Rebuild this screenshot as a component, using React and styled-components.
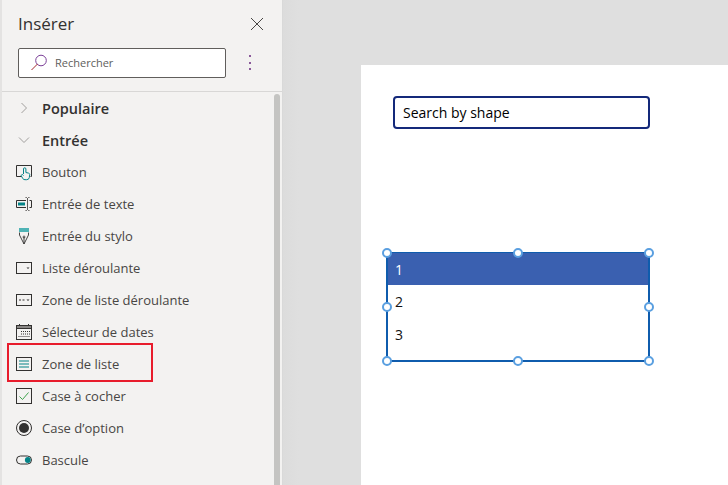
import styled, { createGlobalStyle } from "styled-components";

const GlobalStyle = createGlobalStyle`
    html, body {
        margin: 0;
        padding: 0;
        height: 485px;
        overflow: hidden;
        background: #dfdfdf;
    }
    #root {
        height: 485px;
    }
`

const Screen = styled.div`
    display: flex;
    width: 728px;
    height: 485px;
    overflow: hidden;
    font-family: "Open Sans", "Noto Sans", sans-serif;
`

const Panel = styled.aside`
    position: relative;
    box-sizing: border-box;
    width: 283px;
    height: 485px;
    flex: none;
    background: #f3f2f1;
    border-left: 2px solid #e4e3e2;
    border-right: 1px solid #d9d9d9;
    overflow: hidden;
`

const PanelHeader = styled.div`
    display: flex;
    align-items: center;
    justify-content: space-between;
    height: 47px;
    padding: 0 18px 0 16px;
`

const PanelTitle = styled.h2`
    margin: 0;
    font-size: 17px;
    font-weight: 400;
    color: #323130;
`

const IconButton = styled.button`
    display: flex;
    align-items: center;
    justify-content: center;
    padding: 0;
    border: 0;
    background: none;
`

const SearchRow = styled.div`
    display: flex;
    align-items: center;
    gap: 23px;
    height: 44px;
    padding-left: 16px;
    border-bottom: 1px solid #d8d7d6;
`

const SearchBox = styled.div`
    box-sizing: border-box;
    display: flex;
    align-items: center;
    gap: 7px;
    width: 208px;
    height: 30px;
    margin-bottom: 13px;
    padding: 0 0 0 12px;
    background: #fff;
    border: 1px solid #605e5c;
    border-radius: 2px;
    font-size: 11px;
    color: #605e5c;
`

const MoreDots = styled.div`
    display: flex;
    flex-direction: column;
    gap: 4.5px;
    margin-bottom: 13px;

    span {
        width: 2px;
        height: 2px;
        background: #8a5a9a;
    }
`

const Row = styled.div`
    display: flex;
    align-items: center;
    height: 32px;
`

const IconSlot = styled.div`
    display: flex;
    align-items: center;
    justify-content: center;
    width: 18px;
    margin-left: 13px;
    margin-right: 9px;

    svg {
        flex: none;
    }
`

const SectionLabel = styled.span`
    font-size: 14.5px;
    font-weight: 600;
    color: #323130;
`

const ItemLabel = styled.span`
    font-size: 13px;
    color: #484644;
`

const Highlight = styled.div`
    position: absolute;
    left: 5px;
    top: 343px;
    box-sizing: border-box;
    width: 146px;
    height: 39px;
    border: 2px solid #e81c2c;
`

const ScrollThumb = styled.div`
    position: absolute;
    left: 272px;
    top: 94px;
    width: 6px;
    height: 400px;
    border-radius: 3px;
    background: #c4c4c2;
`

const Canvas = styled.main`
    flex: 1;
    padding: 65px 0 0 78px;
    background: linear-gradient(90deg, #dcdcdc, #dfdfdf 16px);
`

const Page = styled.div`
    box-sizing: border-box;
    height: 420px;
    padding: 31px 0 0 25px;
    background: #fff;
`

const ShapeInput = styled.div`
    box-sizing: border-box;
    display: flex;
    align-items: center;
    width: 257px;
    height: 33px;
    margin-left: 7px;
    padding-left: 8px;
    border: 2px solid #14297a;
    border-radius: 4px;
    font-size: 14px;
    color: #000;
`

const ListBox = styled.div`
    position: relative;
    box-sizing: border-box;
    width: 264px;
    height: 110px;
    margin-top: 123px;
    border: 2px solid #0f5cad;
    border-width: 1px 2px 2px 2px;
`

const ListRow = styled.div`
    display: flex;
    align-items: center;
    height: ${props => (props.$selected ? 32 : 33)}px;
    padding-left: 7px;
    font-size: 14px;
    color: ${props => (props.$selected ? "#fff" : "#111")};
    background: ${props => (props.$selected ? "#3a60b0" : "transparent")};
`

const Handle = styled.span`
    position: absolute;
    left: ${props => props.$x}px;
    top: ${props => props.$y}px;
    box-sizing: border-box;
    width: 10px;
    height: 10px;
    background: #fff;
    border: 2px solid #5a9fe0;
    border-radius: 50%;
`

const stroke = "#323130";
const teal = "#038387";

const icons = {
    button: (
        <svg width="18" height="18" viewBox="0 0 18 18" fill="none">
            <path d="M6.5 13.5H1.5V2.5H16.5V13.5H15.5" stroke={stroke} />
            <path d="M8.5 11V6a1.2 1.2 0 0 1 2.4 0V9.5l2.6.6c.9.2 1.4.9 1.2 1.7l-.4 2.7a2.6 2.6 0 0 1-2.6 2.2H10a2.6 2.6 0 0 1-2.1-1L6.3 13c-.6-1 .9-2 1.7-1.1L8.5 12.5" stroke={teal} />
        </svg>
    ),
    text: (
        <svg width="18" height="18" viewBox="0 0 18 18" fill="none">
            <path d="M11 5.5H1.5V12.5H11" stroke={stroke} />
            <rect x="3" y="7.5" width="7" height="3" fill={teal} />
            <path d="M14.5 5.5H16.5V12.5H14.5" stroke={stroke} />
            <path d="M10.5 2.5H11.5L12.5 3.5L13.5 2.5H14.5M12.5 3.5V14.5M10.5 15.5H11.5L12.5 14.5L13.5 15.5H14.5" stroke={stroke} strokeWidth=".8" />
        </svg>
    ),
    pen: (
        <svg width="18" height="18" viewBox="0 0 18 18" fill="none">
            <rect x="4" y="1" width="10" height="4" fill="#4fb3b5" />
            <path d="M4.5 5.5V8L9 17L13.5 8V5.5M9 10V17" stroke={stroke} strokeWidth=".9" />
            <circle cx="9" cy="10" r="1" stroke={stroke} strokeWidth=".8" />
        </svg>
    ),
    dropdown: (
        <svg width="18" height="18" viewBox="0 0 18 18" fill="none">
            <rect x="1.5" y="3.5" width="15" height="11" stroke={stroke} />
            <path d="M11.5 8.5H14.5L13 10Z" fill={stroke} />
        </svg>
    ),
    combo: (
        <svg width="18" height="18" viewBox="0 0 18 18" fill="none">
            <rect x="1.5" y="3.5" width="15" height="11" stroke={stroke} />
            <path d="M4 9H6M7.5 9H9.5" stroke={stroke} />
            <path d="M11.5 8.5H14.5L13 10Z" fill={stroke} />
        </svg>
    ),
    date: (
        <svg width="18" height="18" viewBox="0 0 18 18" fill="none">
            <rect x="1.5" y="2.5" width="15" height="14" stroke={stroke} />
            <rect x="1.5" y="2.5" width="15" height="3" fill="#8a8886" stroke={stroke} />
            <path d="M4.5 1V3M13.5 1V3" stroke={stroke} />
            <path d="M6 8.5H15M6 11H15M3.5 13.5H15" stroke={stroke} strokeDasharray="1 1" />
        </svg>
    ),
    list: (
        <svg width="18" height="18" viewBox="0 0 18 18" fill="none">
            <rect x="1.5" y="2.5" width="15" height="13" stroke={stroke} />
            <path d="M4 6H14M4 9H14M4 12H14" stroke={teal} />
        </svg>
    ),
    check: (
        <svg width="18" height="18" viewBox="0 0 18 18" fill="none">
            <rect x="1.5" y="1.5" width="15" height="15" stroke={stroke} />
            <path d="M4.5 9.5L7.5 12.5L13.5 5.5" stroke="#3fa34d" />
        </svg>
    ),
    radio: (
        <svg width="18" height="18" viewBox="0 0 18 18" fill="none">
            <circle cx="9" cy="9" r="7.5" stroke={stroke} />
            <circle cx="9" cy="9" r="5" fill={stroke} />
        </svg>
    ),
    toggle: (
        <svg width="18" height="18" viewBox="0 0 18 18" fill="none">
            <rect x="1.5" y="5" width="15" height="8" rx="4" stroke={stroke} />
            <circle cx="12.8" cy="9" r="2.9" fill={teal} />
        </svg>
    ),
}

const items = [
    ["button", "Bouton"],
    ["text", "Entrée de texte"],
    ["pen", "Entrée du stylo"],
    ["dropdown", "Liste déroulante"],
    ["combo", "Zone de liste déroulante"],
    ["date", "Sélecteur de dates"],
    ["list", "Zone de liste"],
    ["check", "Case à cocher"],
    ["radio", "Case d’option"],
    ["toggle", "Bascule"],
]

const handles = [
    [-6, -5], [125, -5], [256, -5],
    [-6, 49], [256, 49],
    [-6, 103], [125, 103], [256, 103],
]

function App() {
    return (
        <Screen>
            <GlobalStyle />
            <Panel>
                <PanelHeader>
                    <PanelTitle>Insérer</PanelTitle>
                    <IconButton>
                        <svg width="14" height="14" viewBox="0 0 14 14" fill="none">
                            <path d="M1 1L13 13M13 1L1 13" stroke="#484644" />
                        </svg>
                    </IconButton>
                </PanelHeader>
                <SearchRow>
                    <SearchBox>
                        <svg width="17" height="17" viewBox="0 0 17 17" fill="none">
                            <circle cx="10" cy="6.5" r="5.3" stroke="#7b3f98" />
                            <path d="M6.5 10L0.5 16" stroke="#a4262c" />
                        </svg>
                        Rechercher
                    </SearchBox>
                    <MoreDots><span /><span /><span /></MoreDots>
                </SearchRow>
                <Row>
                    <IconSlot>
                        <svg width="10" height="12" viewBox="0 0 10 12" fill="none">
                            <path d="M2.5 1L7.5 6L2.5 11" stroke="#a19f9d" />
                        </svg>
                    </IconSlot>
                    <SectionLabel>Populaire</SectionLabel>
                </Row>
                <Row>
                    <IconSlot>
                        <svg width="12" height="10" viewBox="0 0 12 10" fill="none">
                            <path d="M1 2.5L6 7.5L11 2.5" stroke="#a19f9d" />
                        </svg>
                    </IconSlot>
                    <SectionLabel>Entrée</SectionLabel>
                </Row>
                {items.map(([icon, label]) => (
                    <Row key={label}>
                        <IconSlot>{icons[icon]}</IconSlot>
                        <ItemLabel>{label}</ItemLabel>
                    </Row>
                ))}
                <Highlight />
                <ScrollThumb />
            </Panel>
            <Canvas>
                <Page>
                    <ShapeInput>Search by shape</ShapeInput>
                    <ListBox>
                        <ListRow $selected>1</ListRow>
                        <ListRow>2</ListRow>
                        <ListRow>3</ListRow>
                        {handles.map(([x, y]) => (
                            <Handle key={`${x}-${y}`} $x={x} $y={y} />
                        ))}
                    </ListBox>
                </Page>
            </Canvas>
        </Screen>
    );
}

export default App;
